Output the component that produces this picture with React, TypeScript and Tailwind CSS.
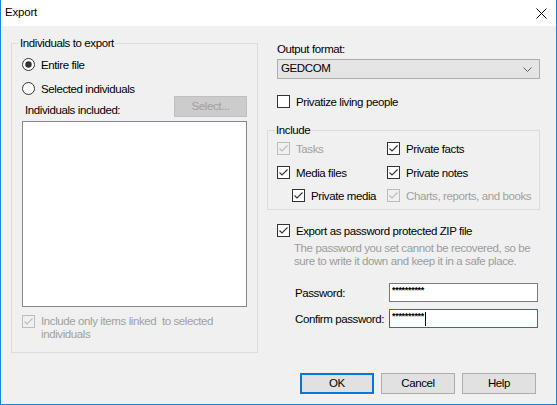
import React from "react";

function CheckBox({ checked, disabled }: { checked?: boolean; disabled?: boolean }) {
  const c = disabled ? "#bcbcbc" : "#333333";
  return (
    <svg width="13" height="13" viewBox="0 0 13 13" className="shrink-0">
      <rect x="0.5" y="0.5" width="12" height="12" fill={disabled ? "#f0f0f0" : "#ffffff"} stroke={c} />
      {checked && <path d="M2.5 6.5 L5 9 L10.5 3.5" fill="none" stroke={c} strokeWidth="1.1" />}
    </svg>
  );
}

function Radio({ checked }: { checked?: boolean }) {
  return (
    <svg width="13" height="13" viewBox="0 0 13 13" className="shrink-0">
      <circle cx="6.5" cy="6.5" r="6" fill="#ffffff" stroke="#333333" />
      {checked && <circle cx="6.5" cy="6.5" r="3.2" fill="#333333" />}
    </svg>
  );
}

function Check({ label, checked, disabled, className = "" }: { label: string; checked?: boolean; disabled?: boolean; className?: string }) {
  return (
    <div className={`flex h-[13px] items-center gap-[6px] ${className}`}>
      <CheckBox checked={checked} disabled={disabled} />
      <span className={`leading-[14px] whitespace-nowrap ${disabled ? "text-[#a0a0a0]" : "text-black"}`}>{label}</span>
    </div>
  );
}

function Button({ label, primary }: { label: string; primary?: boolean }) {
  return (
    <button
      className={`flex h-[21px] w-[74px] items-center justify-center bg-[#e1e1e1] text-black ${
        primary ? "border-2 border-[#0078d7]" : "border border-[#adadad]"
      }`}
    >
      {label}
    </button>
  );
}

export default function App() {
  return (
    <div className="flex h-[405px] w-[557px] flex-col border-x border-b border-[#1883d7] bg-[#f0f0f0] font-['Liberation_Sans',Arial,sans-serif] text-[11.5px] tracking-[-0.4px] text-black">
      {/* title bar */}
      <div className="flex h-[26px] shrink-0 items-center justify-between bg-white pl-[4px] pr-[9px]">
        <span className="text-[11.5px] tracking-[-0.2px]">Export</span>
        <svg width="11" height="11" viewBox="0 0 11 11">
          <path d="M0.5 0.5 L10.5 10.5 M10.5 0.5 L0.5 10.5" stroke="#000" strokeWidth="1" />
        </svg>
      </div>

      <div className="flex gap-[9px] pl-[10px] pt-[10px]">
        {/* left group */}
        <fieldset className="h-[317px] w-[247px] shrink-0 border border-[#dcdcdc]">
          <legend className="ml-[7px] px-[1px] leading-[14px]">Individuals to export</legend>
          <div className="flex flex-col pl-[10px]">
            <div className="mt-[8px] flex h-[13px] items-center gap-[6px]">
              <Radio checked />
              <span className="leading-[14px]">Entire file</span>
            </div>
            <div className="mt-[11px] flex h-[13px] items-center gap-[6px]">
              <Radio />
              <span className="leading-[14px]">Selected individuals</span>
            </div>
            <div className="mt-[1px] flex h-[21px] w-[225px] items-end justify-between">
              <span className="pl-[3px] leading-[14px]">Individuals included:</span>
              <div className="flex h-[21px] w-[73px] items-center justify-center border border-[#bfbfbf] bg-[#cccccc] text-[#a0a0a0]">
                Select...
              </div>
            </div>
            <div className="mt-[4px] h-[186px] w-[225px] border border-[#828790] bg-white" />
            <div className="mt-[8px] flex items-start gap-[6px]">
              <CheckBox checked disabled />
              <span className="leading-[13px] text-[#a0a0a0]">
                Include only items linked{"\u00a0"} to selected
                <br />
                individuals
              </span>
            </div>
          </div>
        </fieldset>

        {/* right column */}
        <div className="flex w-[273px] flex-col">
          <div className="flex flex-col pl-[10px]">
            <span className="mt-[6px] leading-[14px]">Output format:</span>
            <div className="mt-[3px] flex h-[20px] w-[263px] items-center justify-between border border-[#adadad] bg-[#e5e5e5] pl-[3px] pr-[7px]">
              <span>GEDCOM</span>
              <svg width="9" height="5" viewBox="0 0 9 5">
                <path d="M0.5 0.5 L4.5 4.5 L8.5 0.5" fill="none" stroke="#606060" strokeWidth="1" />
              </svg>
            </div>
            <Check label="Privatize living people" className="mt-[16px]" />
          </div>

          <fieldset className="mt-[15px] h-[87px] w-[273px] border border-[#dcdcdc]">
            <legend className="ml-[7px] px-[1px] leading-[14px]">Include</legend>
            <div className="flex flex-col pl-[9px]">
              <div className="mt-[5px] flex">
                <Check label="Tasks" checked disabled className="w-[110px]" />
                <Check label="Private facts" checked />
              </div>
              <div className="mt-[11px] flex">
                <Check label="Media files" checked className="w-[110px]" />
                <Check label="Private notes" checked />
              </div>
              <div className="mt-[10px] flex">
                <Check label="Private media" checked className="w-[110px] pl-[15px]" />
                <Check label="Charts, reports, and books" checked disabled />
              </div>
            </div>
          </fieldset>

          <div className="flex flex-col pl-[10px]">
            <Check label="Export as password protected ZIP file" checked className="mt-[14px]" />
            <p className="mt-[5px] pl-[17px] leading-[13px] text-[#9c9c9c]">
              The password you set cannot be recovered, so be
              <br />
              sure to write it down and keep it in a safe place.
            </p>
            <div className="mt-[15px] flex h-[19px] items-center pl-[18px]">
              <span className="w-[94px] leading-[14px]">Password:</span>
              <div className="flex h-[19px] w-[149px] items-start border border-[#7a7a7a] bg-white pl-[2px] pt-[2px]">
                <span className="text-[9px] font-bold leading-[9px] tracking-[-0.3px]">**********</span>
              </div>
            </div>
            <div className="mt-[7px] flex h-[19px] items-center pl-[18px]">
              <span className="w-[94px] leading-[14px]">Confirm password:</span>
              <div className="flex h-[19px] w-[149px] items-start border border-[#0078d7] bg-white pl-[2px] pt-[2px]">
                <span className="text-[9px] font-bold leading-[9px] tracking-[-0.3px]">**********</span>
                <span className="ml-[1px] h-[14px] w-[1px] bg-black" />
              </div>
            </div>
          </div>
        </div>
      </div>

      <div className="mt-[20px] flex justify-end gap-[7px] pr-[20px]">
        <Button label="OK" primary />
        <Button label="Cancel" />
        <Button label="Help" />
      </div>
    </div>
  );
}
